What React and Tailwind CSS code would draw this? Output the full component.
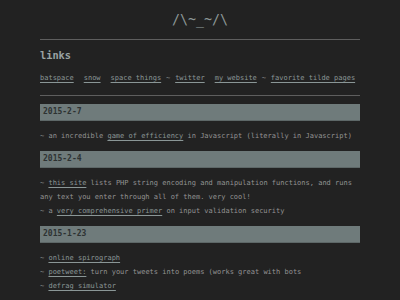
import React from 'react';

const A = ({ children }) => (
    <a href="#" className="text-[#8a9696] underline underline-offset-[1.5px]">{children}</a>
);

const Gap = () => <span className="inline-block w-[10px]" />;
const Tilde = () => <span className="inline-block w-[14px] text-center">~</span>;

const DateBar = ({ children }) => (
    <div className="h-[17px] bg-[#6f7b7b] border-b border-[#5d6767] px-[3px] flex items-center font-bold text-[8px] text-[#2d3232]">
        {children}
    </div>
);

const Items = ({ children }) => <div className="my-[8px] leading-[14px]">{children}</div>;

export default function App() {
    return (
        <div className="min-h-[300px] bg-[#222222] text-[#939393] text-[7px]" style={{ fontFamily: '"DejaVu Sans Mono", monospace' }}>
            <div className="w-[320px] mx-auto pt-[12px]">
                <div className="text-center text-[13.3px] leading-[16px] text-[#8c9797]">/\~_~/\</div>
                <div className="mt-[10.5px] border-t border-[#5e5e5e]" />
                <div className="mt-[8px] text-[10.3px] leading-[14px] font-bold text-[#9aa3a3]">links</div>
                <div className="mt-[9px] leading-[14px] whitespace-nowrap">
                    <A>batspace</A><Gap /><A>snow</A><Gap /><A>space things</A><Tilde /><A>twitter</A><Gap /><A>my website</A><Tilde /><A>favorite tilde pages</A>
                </div>
                <div className="mt-[10px] border-t border-[#5e5e5e]" />
                <div className="mt-[8px]">
                    <DateBar>2015-2-7</DateBar>
                    <Items>
                        <div>~ an incredible <A>game of efficiency</A> in Javascript (literally in Javascript)</div>
                    </Items>
                    <DateBar>2015-2-4</DateBar>
                    <Items>
                        <div>~ <A>this site</A> lists PHP string encoding and manipulation functions, and runs any text you enter through all of them. very cool!</div>
                        <div>~ a <A>very comprehensive primer</A> on input validation security</div>
                    </Items>
                    <DateBar>2015-1-23</DateBar>
                    <Items>
                        <div>~ <A>online spirograph</A></div>
                        <div>~ <A>poetweet:</A> turn your tweets into poems (works great with bots</div>
                        <div>~ <A>defrag simulator</A></div>
                    </Items>
                </div>
            </div>
        </div>
    );
}
